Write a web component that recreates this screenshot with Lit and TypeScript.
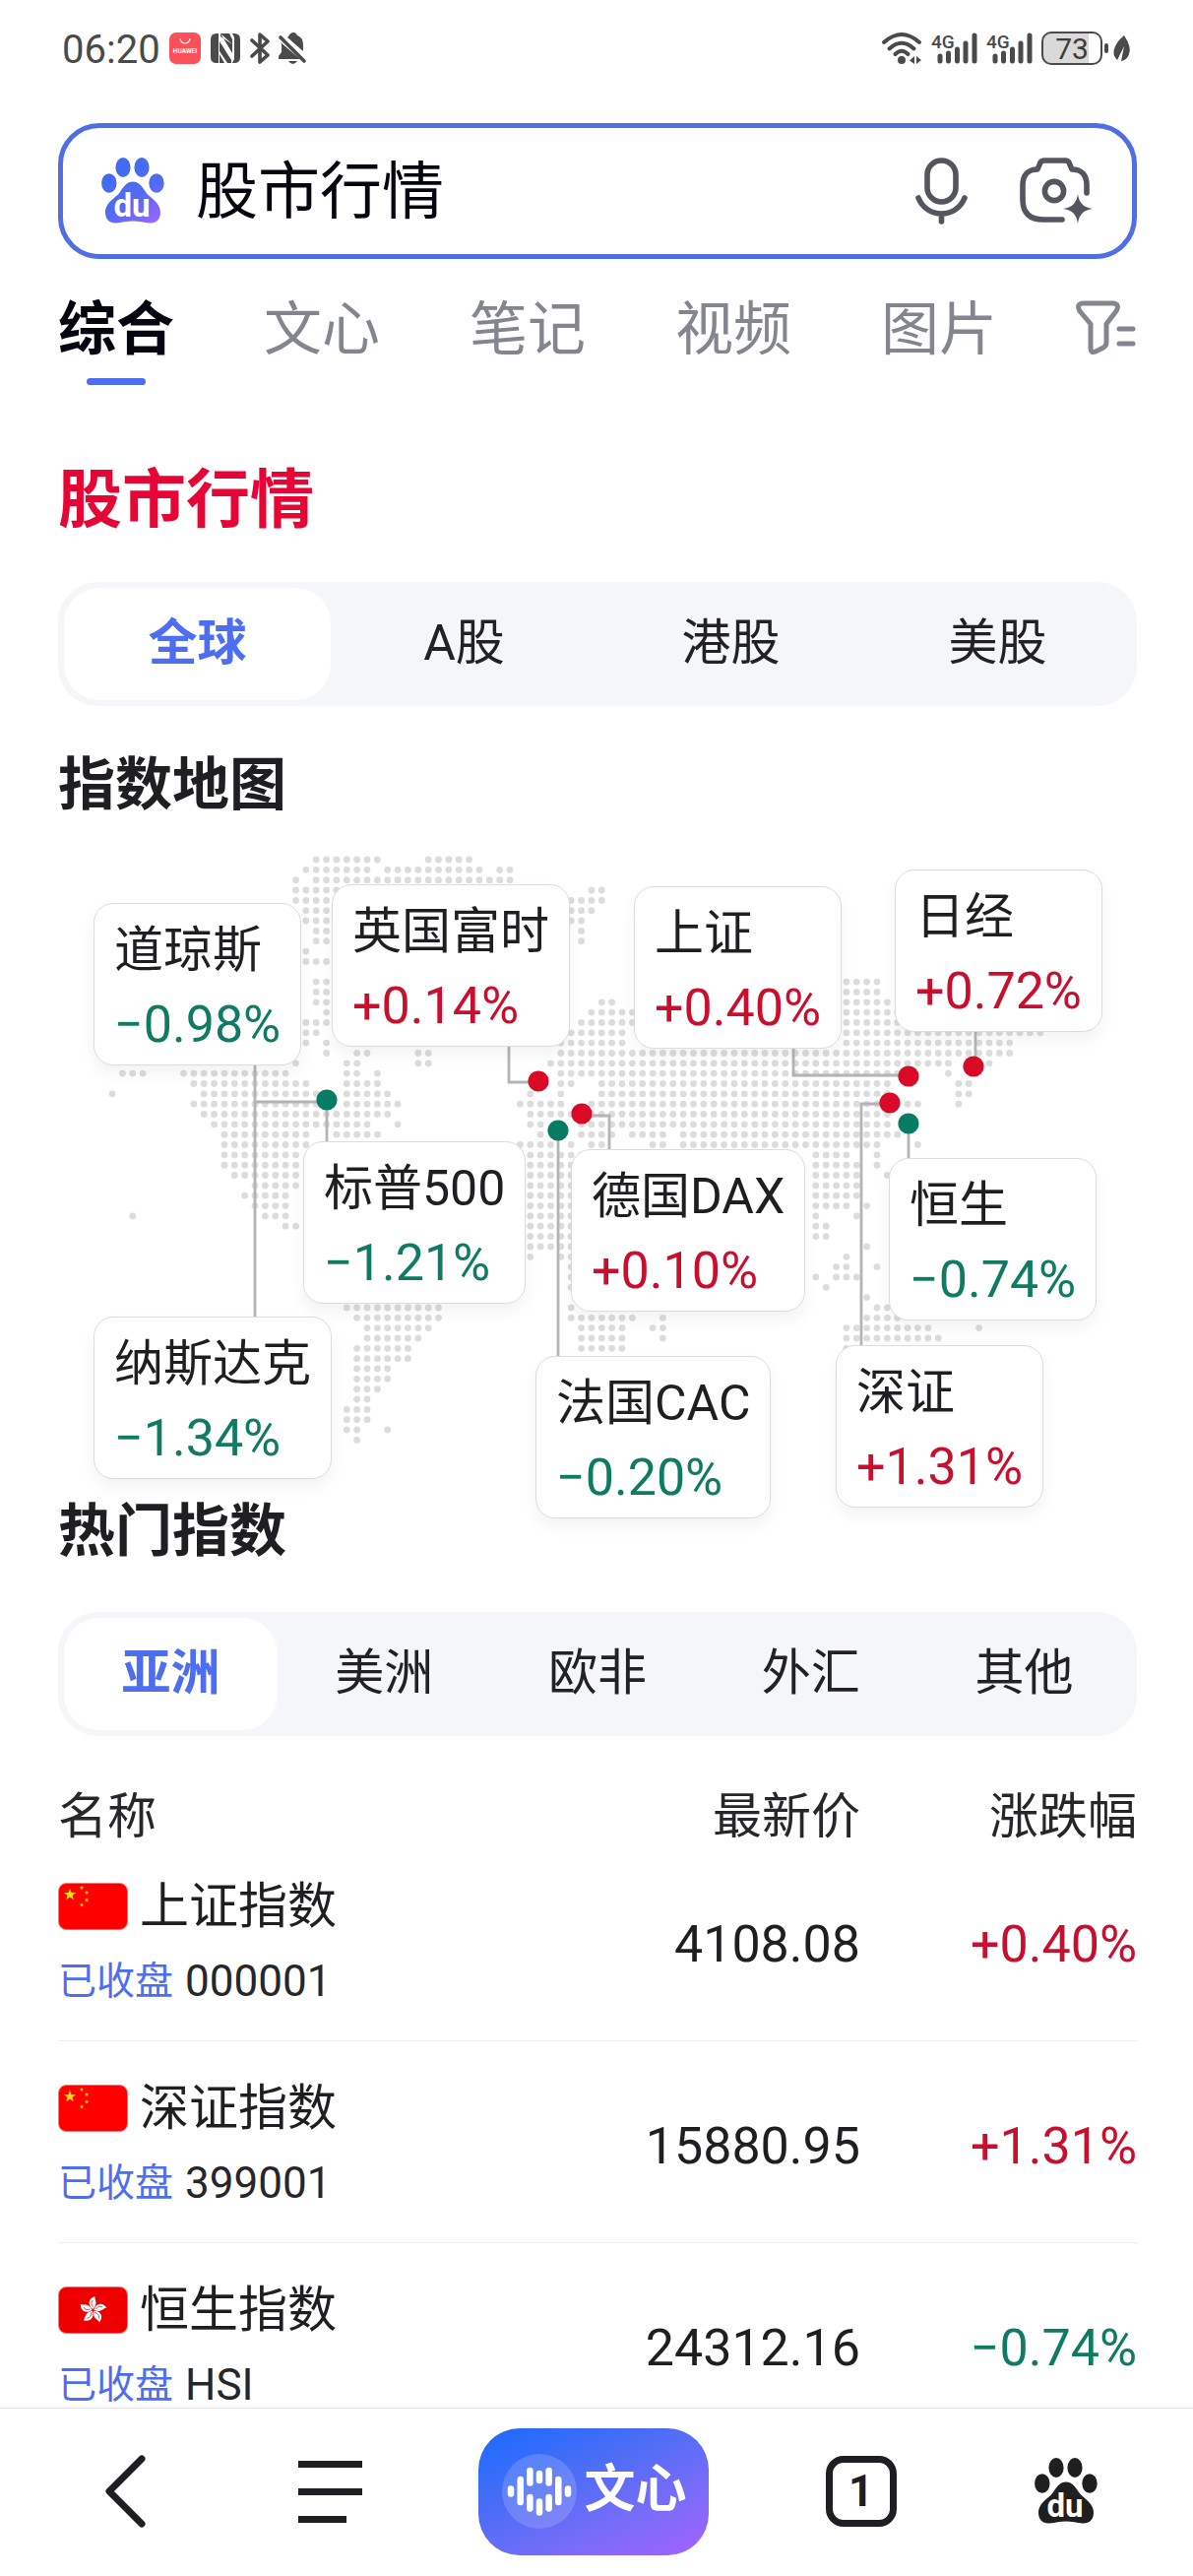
import {LitElement, html, svg, css} from 'lit';
import {customElement, property, state} from 'lit/decorators.js';
import {classMap} from 'lit/directives/class-map.js';
import {styleMap} from 'lit/directives/style-map.js';

interface IndexCard {
  name: string;
  change: string;
  x: number;
  y: number;
}

interface IndexRow {
  flag: 'cn' | 'hk';
  name: string;
  code: string;
  price: string;
  change: string;
}

const MAP_WIDTH = 1096;
const MAP_HEIGHT = 692;
const GRID_LEFT = 55;
const GRID_TOP = 43;
const GRID_STEP_X = 10.36;
const GRID_STEP_Y = 10.34;

// One entry per dot row of the world map, "from-to" column runs
const MAP_ROWS = [
  '20-26 31-35',
  '19-25 27-36 38-39',
  '18 20-39',
  '18-39 47-48',
  '18-21 45-48',
  '19-21 45-47',
  '19-21 45-46',
  '20-21 46',
  '20-21 46',
  '19',
  '19-21',
  '',
  '20-21 72-75',
  '20-21 72-75',
  '20-21 48-49 72-76',
  '21 47-51 72-77',
  '19-21 46-51 72-77',
  '19-20 45-50 72-91',
  '19 21 44-50 72-88',
  '21 24-25 30-31 44-88',
  '18 23-24 30-31 43-82 86',
  '1-3 7-17 23-24 26 44-78 82',
  '8-19 23-26 44-45 48-76 83-84',
  '0 9-20 23-27 41 44 48-76 83-84',
  '8-20 23-28 40-44 47-79 83',
  '9-27 41-76',
  '10-25 28 41-42 46-76',
  '11-19 22-26 42 46-49 51-54 56-77',
  '11-19 40-43 45 47-48 53-54 56-75 79',
  '11-18 41-47 69-72 75',
  '11-18 41-45 69-73 75',
  '12-18 41-45 69-73 76',
  '14-18 41-45 69-73',
  '13-17 41-45 69-73',
  '14-17 41-45 69-72 74',
  '2 15-17 41-45 69 73',
  '17-18 41-45 69-70',
  '41-45 69-70',
  '41-45 74',
  '41 44-45 72',
  '45 71-72 75',
  '45 69 71-73',
  '45 70',
  '74',
  '23-32 45 75-76',
  '24-32 45-51 54 74-77',
  '25-31 46-50 53-54 72-80 85',
  '25-30 46-50 54 72-81',
  '24-29 46-50 72',
  '24-29',
  '24-27',
  '24-27',
  '24-26',
  '24-25',
  '23-25',
  '23-25',
  '23-24 27',
  '24',
];

const CARDS: IndexCard[] = [
  {name: '道琼斯', change: '−0.98%', x: 36, y: 87},
  {name: '英国富时', change: '+0.14%', x: 278, y: 68},
  {name: '上证', change: '+0.40%', x: 585, y: 70},
  {name: '日经', change: '+0.72%', x: 850, y: 53},
  {name: '标普500', change: '−1.21%', x: 249, y: 329},
  {name: '德国DAX', change: '+0.10%', x: 521, y: 337},
  {name: '恒生', change: '−0.74%', x: 844, y: 346},
  {name: '纳斯达克', change: '−1.34%', x: 36, y: 507},
  {name: '法国CAC', change: '−0.20%', x: 485, y: 547},
  {name: '深证', change: '+1.31%', x: 790, y: 536},
];

const CONNECTORS = [
  'M200 250V508M200 289H273V330',
  'M458 230V269H488',
  'M747 234V262H863',
  'M932 216V253',
  'M532 303H560V338',
  'M508 318V548',
  'M845 291H816V537',
  'M864 311V347',
];

const MARKERS = [
  {x: 273, y: 287, up: false},
  {x: 488, y: 268, up: true},
  {x: 864, y: 263, up: true},
  {x: 930, y: 253, up: true},
  {x: 532, y: 301, up: true},
  {x: 508, y: 318, up: false},
  {x: 845, y: 290, up: true},
  {x: 864, y: 311, up: false},
];

const ROWS: IndexRow[] = [
  {flag: 'cn', name: '上证指数', code: '000001', price: '4108.08', change: '+0.40%'},
  {flag: 'cn', name: '深证指数', code: '399001', price: '15880.95', change: '+1.31%'},
  {flag: 'hk', name: '恒生指数', code: 'HSI', price: '24312.16', change: '−0.74%'},
];

const isUp = (change: string) => change.startsWith('+');

const starPoints = (cx: number, cy: number, r: number) =>
  Array.from({length: 10}, (_, i) => {
    const radius = i % 2 ? r * 0.4 : r;
    const angle = (i * Math.PI) / 5 - Math.PI / 2;
    return `${(cx + radius * Math.cos(angle)).toFixed(1)},${(cy + radius * Math.sin(angle)).toFixed(1)}`;
  }).join(' ');

const pawIcon = (fill: string) => html`
  <svg width="64" height="68" viewBox="0 0 64 68" aria-hidden="true">
    <defs>
      <linearGradient id="paw-gradient" gradientUnits="userSpaceOnUse" x1="16" y1="10" x2="56" y2="70">
        <stop offset="0" stop-color="#3f6cf0"/>
        <stop offset="0.5" stop-color="#536bf2"/>
        <stop offset="1" stop-color="#a066ff"/>
      </linearGradient>
    </defs>
    <g fill=${fill}>
      <ellipse cx="22" cy="10" rx="7.6" ry="10"/>
      <ellipse cx="41" cy="10" rx="7.6" ry="10"/>
      <ellipse cx="7.8" cy="26" rx="7.7" ry="9.8"/>
      <ellipse cx="56" cy="26" rx="7.7" ry="9.8"/>
      <path d="M32 24.500C38 24.500 41 29 45 35C49 41 60 45 60 56C60 63 55 67 49 66.500C43 66 38 64.500 32 64.500C26 64.500 21 66 15 66.500C9 67 4 63 4 56C4 45 15 41 19 35C23 29 26 24.500 32 24.500Z"/>
    </g>
    <text x="31" y="60" text-anchor="middle" fill="#fff" font-size="33" font-weight="700">du</text>
  </svg>`;

@customElement('status-bar')
class StatusBar extends LitElement {
  static styles = css`
    :host {
      display: flex;
      align-items: center;
      justify-content: space-between;
      height: 98px;
      padding: 0 64px 0 63px;
      color: #4a4a4a;
      font-size: 40px;
      line-height: 48px;
    }

    .group {
      display: flex;
      align-items: center;
      gap: 9px;
    }

    .time {
      padding-top: 3px;
    }

    svg {
      display: block;
      overflow: visible;
    }
  `;

  renderSignal() {
    return html`
      <svg width="47" height="34" viewBox="0 0 47 34" role="img" aria-label="4G">
        <text x="0" y="17" font-size="19" font-weight="500" fill="#4a4a4a">4G</text>
        <g stroke="#4a4a4a" stroke-width="5" stroke-linecap="round">
          <path d="M9 25V30M17.500 22V30M26.500 18V30M35 12V30M44 4V30"/>
        </g>
      </svg>`;
  }

  render() {
    return html`
      <div class="group">
        <time class="time">06:20</time>
        <svg width="32" height="32" viewBox="0 0 32 32" role="img" aria-label="HUAWEI">
          <rect width="32" height="32" rx="7" fill="#fb4f5a"/>
          <path d="M11 6a5 5 0 0 0 10 0" fill="none" stroke="#fff" stroke-width="1.200"/>
          <text x="16" y="21" text-anchor="middle" font-size="6.500" font-weight="700" fill="#fff">HUAWEI</text>
        </svg>
        <svg width="32" height="30" viewBox="-1 0 32 30" aria-hidden="true">
          <path fill="#4a4a4a" d="M6 0H8V30H6Q0 30 0 24V6Q0 0 6 0ZM10 0L22 20V11L10 3ZM22 0H24Q30 0 30 6V24Q30 30 24 30H22L24 26V4ZM9 8L21 27V30H17L9 18ZM9 21L14 30H9ZM10 0H19L22 6V11Z"/>
        </svg>
        <svg width="20" height="32" viewBox="0 0 20 32" aria-hidden="true">
          <path d="M2 8L18 23L10 30V2L18 9L2 24" fill="none" stroke="#4a4a4a" stroke-width="3.600" stroke-linejoin="round" stroke-linecap="round"/>
        </svg>
        <svg width="28" height="32" viewBox="0 0 28 32" aria-hidden="true">
          <path fill="#4a4a4a" d="M10 4Q12 0 15 0Q18 0 19 3Q25 5 25 13V19L9 5ZM2 10L22 27H0V24L3 20V12ZM10 29H19Q17 32 14.500 32Q12 32 10 29Z"/>
          <path d="M2 5L26 29" stroke="#4a4a4a" stroke-width="3.600" stroke-linecap="round"/>
        </svg>
      </div>
      <div class="group">
        <svg width="41" height="34" viewBox="0 0 41 34" aria-hidden="true">
          <g fill="none" stroke="#4a4a4a" stroke-width="4" stroke-linecap="round">
            <path d="M2 11Q20 -5 38 11M7.500 17.500Q20 6 32.500 17.500M13.500 23Q20 16.500 26.500 23"/>
          </g>
          <circle cx="20" cy="29" r="4" fill="#4a4a4a"/>
          <path d="M33 25V33L28 29.500ZM35 25L40 29L35 33Z" fill="#4a4a4a"/>
        </svg>
        ${this.renderSignal()}
        ${this.renderSignal()}
        <svg width="90" height="34" viewBox="0 0 90 34" role="img" aria-label="73%">
          <path d="M9 2H48V32H9Q2 32 2 25V9Q2 2 9 2Z" fill="#d9d9d9"/>
          <rect x="1" y="1" width="60" height="32" rx="9" fill="none" stroke="#4a4a4a" stroke-width="2"/>
          <text x="31" y="28" text-anchor="middle" font-size="30" fill="#3c3c3c">73</text>
          <rect x="64" y="12" width="4" height="10" rx="2" fill="#4a4a4a"/>
          <path d="M84 4Q92 16 89 23Q87 29 81 30L84 15L77 29Q71 23 75 15Q77 10 84 4Z" fill="#4a4a4a"/>
        </svg>
      </div>
    `
  }
}

@customElement('segment-bar')
class SegmentBar extends LitElement {
  @property({type: Array}) items: string[] = [];
  @state() selected = 0;

  static styles = css`
    :host {
      display: flex;
      height: 126px;
      box-sizing: border-box;
      padding: 6px;
      border-radius: 40px;
      background: #f4f6fa;
    }

    .segment {
      flex: 1;
      border: none;
      border-radius: 36px;
      padding: 0 0 2px;
      background: none;
      color: #222226;
      font: inherit;
      font-size: 50px;
      line-height: 60px;
      cursor: pointer;
    }

    .selected {
      background: #fff;
      color: #4e6ef2;
      font-weight: 700;
    }
  `;

  render() {
    return html`
      ${this.items.map((item, i) => html`
        <button class=${classMap({segment: true, selected: i === this.selected})}
                @click=${() => this.selected = i}>${item}</button>
      `)}
    `
  }
}

@customElement('index-map')
class IndexMap extends LitElement {
  static styles = css`
    :host {
      display: block;
      position: relative;
      aspect-ratio: 1096 / 692;
    }

    .canvas {
      display: block;
      width: 100%;
      height: 100%;
    }

    .card {
      position: absolute;
      display: flex;
      flex-direction: column;
      gap: 16px;
      box-sizing: border-box;
      min-width: 208px;
      padding: 17px 20px 10px;
      border: 1px solid #dcdcde;
      border-radius: 20px;
      background: #fff;
      box-shadow: 0 8px 16px rgba(0, 0, 0, 0.05);
      color: #1f1f23;
      font-size: 50px;
      line-height: 60px;
      white-space: nowrap;
      text-decoration: none;
    }

    .change {
      font-size: 52px;
      color: #0f7b62;
    }

    .up {
      color: #c8102e;
    }
  `;

  renderDots() {
    return MAP_ROWS.map((runs, row) => runs.split(' ').filter(Boolean).map(run => {
      const [from, to = from] = run.split('-').map(Number);
      return Array.from({length: to - from + 1}, (_, i) => svg`
        <circle cx=${(GRID_LEFT + (from + i) * GRID_STEP_X).toFixed(1)}
                cy=${(GRID_TOP + row * GRID_STEP_Y).toFixed(1)} r="3.400"/>`);
    }));
  }

  render() {
    return html`
      <svg class="canvas" viewBox="0 0 ${MAP_WIDTH} ${MAP_HEIGHT}" aria-hidden="true">
        <g fill="#dcdcdd">${this.renderDots()}</g>
        <g fill="none" stroke="#b3b3b8" stroke-width="2.800">
          ${CONNECTORS.map(d => svg`<path d=${d}/>`)}
        </g>
        ${MARKERS.map(m => svg`<circle cx=${m.x} cy=${m.y} r="10.600" fill=${m.up ? '#da0a26' : '#067c65'}/>`)}
      </svg>
      ${CARDS.map(card => html`
        <a class="card" href="#"
           style=${styleMap({left: `${card.x / MAP_WIDTH * 100}%`, top: `${card.y / MAP_HEIGHT * 100}%`})}>
          <span>${card.name}</span>
          <span class=${classMap({change: true, up: isUp(card.change)})}>${card.change}</span>
        </a>
      `)}
    `
  }
}

@customElement('index-table')
class IndexTable extends LitElement {
  static styles = css`
    :host {
      display: block;
      color: #1f1f23;
    }

    .table {
      width: 100%;
      border-collapse: collapse;
    }

    .table th {
      padding: 0;
      font-size: 50px;
      font-weight: 400;
      line-height: 46px;
      text-align: right;
      color: #26262b;
    }

    .table td {
      padding: 44px 0 36px;
      border-bottom: 1px solid #ededf0;
      font-size: 52px;
      text-align: right;
      white-space: nowrap;
    }

    .table .name {
      text-align: left;
    }

    .table td.name {
      padding-top: 30px;
    }

    .change {
      width: 281px;
      color: #0f7b62;
    }

    .table .up {
      color: #c8102e;
    }

    .title {
      display: flex;
      align-items: center;
      gap: 12px;
      font-size: 50px;
      line-height: 76px;
    }

    .sub {
      display: flex;
      gap: 12px;
      margin-top: 14px;
      font-size: 44px;
      line-height: 48px;
      color: #26262b;
    }

    .closed {
      font-size: 39px;
      color: #4e6ef2;
    }

    .flag {
      display: block;
    }
  `;

  renderFlag(flag: string) {
    if (flag === 'cn') {
      return html`
        <svg class="flag" width="71" height="48" viewBox="0 0 71 48" aria-hidden="true">
          <rect x="0.500" y="0.500" width="70" height="47" rx="8" fill="#ff0000" stroke="#f3787c"/>
          <g fill="#ffe000">
            <polygon points=${starPoints(12, 12, 6.5)}/>
            <polygon points=${starPoints(24, 5, 2.4)}/>
            <polygon points=${starPoints(29, 10, 2.4)}/>
            <polygon points=${starPoints(29, 17.5, 2.4)}/>
            <polygon points=${starPoints(24, 22.5, 2.4)}/>
          </g>
        </svg>`
    }
    return html`
      <svg class="flag" width="71" height="48" viewBox="0 0 71 48" aria-hidden="true">
        <rect x="0.500" y="0.500" width="70" height="47" rx="8" fill="#ee0000" stroke="#f3787c"/>
        <g transform="translate(35.5 24)">
          ${[0, 72, 144, 216, 288].map(angle => svg`
            <g transform="rotate(${angle})">
              <path d="M0 -1C-6 -5 -5 -12 2 -14C1 -11 6 -7 0 -1Z" fill="#fff"/>
              <path d="M0 -3C-2 -6 -2 -8 0 -10" fill="none" stroke="#ee0000" stroke-width="0.700"/>
            </g>`)}
        </g>
      </svg>`
  }

  render() {
    return html`
      <table class="table">
        <thead>
          <tr>
            <th class="name">名称</th>
            <th>最新价</th>
            <th>涨跌幅</th>
          </tr>
        </thead>
        <tbody>
          ${ROWS.map(row => html`
            <tr>
              <td class="name">
                <div class="title">${this.renderFlag(row.flag)}<span>${row.name}</span></div>
                <div class="sub"><span class="closed">已收盘</span><span>${row.code}</span></div>
              </td>
              <td>${row.price}</td>
              <td class=${classMap({change: true, up: isUp(row.change)})}>${row.change}</td>
            </tr>
          `)}
        </tbody>
      </table>
    `
  }
}

@customElement('bottom-nav')
class BottomNav extends LitElement {
  static styles = css`
    :host {
      display: flex;
      align-items: center;
      justify-content: space-between;
      height: 171px;
      box-sizing: border-box;
      padding: 0 97px 2px 107px;
      border-top: 1px solid #e6e6e8;
      background: #fff;
    }

    .item {
      display: flex;
      align-items: center;
      border: none;
      padding: 0;
      background: none;
      color: #1f1f23;
      font: inherit;
      cursor: pointer;
    }

    .back {
      width: 78px;
    }

    .home {
      width: 86px;
      justify-content: flex-end;
    }

    .assistant {
      gap: 6px;
      height: 129px;
      padding: 0 23px;
      border-radius: 42px;
      background: linear-gradient(155deg, #1f6bff 5%, #4f6df5 40%, #7a6cf9 70%, #9d63ff 95%);
      color: #fff;
      font-size: 52px;
      font-weight: 700;
      line-height: 60px;
    }

    .label {
      padding-bottom: 3px;
    }

    .windows {
      justify-content: center;
      box-sizing: border-box;
      width: 72px;
      height: 72px;
      border: 7px solid #1f1f23;
      border-radius: 18px;
      font-size: 44px;
      font-weight: 700;
      line-height: 44px;
    }
  `;

  render() {
    return html`
      <button class="item back" aria-label="返回">
        <svg width="41" height="74" viewBox="0 0 41 74">
          <path d="M37 4L4 37L37 70" fill="none" stroke="#1f1f23" stroke-width="7" stroke-linecap="round" stroke-linejoin="round"/>
        </svg>
      </button>
      <button class="item" aria-label="菜单">
        <svg width="65" height="63" viewBox="0 0 65 63">
          <path d="M0 3.500H65M0 31.500H65M0 59.500H49" stroke="#1f1f23" stroke-width="7"/>
        </svg>
      </button>
      <button class="item assistant">
        <svg width="78" height="78" viewBox="-39 -39 78 78" aria-hidden="true">
          <circle r="38" fill="#fff" fill-opacity="0.16"/>
          <path d="M-29 -2.500V2.500M-19.300 -12V11M-9.600 -21V-8.500M-9.600 6V17.500M0 -18V-11M0 10.500V21.500M9.600 -21V-8.500M9.600 6V17.500M19.300 -12V11M29 -2.500V2.500"
                fill="none" stroke="#fff" stroke-width="6.500" stroke-linecap="round"/>
        </svg>
        <span class="label">文心</span>
      </button>
      <button class="item windows">1</button>
      <button class="item home" aria-label="首页">${pawIcon('#1f1f1f')}</button>
    `
  }
}

@customElement('app-root')
class AppRoot extends LitElement {
  @state() tab = '综合';
  @state() query = '股市行情';

  tabs = ['综合', '文心', '笔记', '视频', '图片'];

  static styles = css`
    :host {
      display: flex;
      flex-direction: column;
      height: 100vh;
      overflow: hidden;
      background: #fff;
      color: #1f1f23;
      font-family: Roboto, "Noto Sans CJK SC", sans-serif;
    }

    .page {
      flex: 1;
      min-height: 0;
      overflow: hidden;
      padding: 0 57px 0 59px;
    }

    .search {
      display: flex;
      align-items: center;
      gap: 32px;
      box-sizing: border-box;
      height: 138px;
      margin: 27px 0 36px;
      padding: 0 40px 0 39px;
      border: 5px solid #4f6fe3;
      border-radius: 42px;
    }

    .query {
      flex: 1;
      min-width: 0;
      border: none;
      outline: none;
      padding: 2px 0 0;
      background: none;
      color: #05060f;
      font: inherit;
      font-size: 63px;
      line-height: 80px;
    }

    .tools {
      display: flex;
      align-items: center;
      gap: 53px;
    }

    .tool {
      display: block;
      border: none;
      padding: 0;
      background: none;
      cursor: pointer;
    }

    .tool svg {
      display: block;
    }

    .tabs {
      display: flex;
      justify-content: space-between;
      align-items: flex-start;
    }

    .tab-list {
      display: flex;
      gap: 91px;
    }

    .tab {
      display: flex;
      flex-direction: column;
      align-items: center;
      gap: 13px;
      border: none;
      padding: 0;
      background: none;
      color: #84868f;
      font: inherit;
      font-size: 59px;
      line-height: 72px;
      cursor: pointer;
    }

    .tab::after {
      content: '';
      width: 60px;
      height: 7px;
      border-radius: 4px;
    }

    .active {
      color: #05060f;
      font-weight: 700;
    }

    .active::after {
      background: #4e6ef2;
    }

    .filter {
      margin-top: 6px;
    }

    .headline {
      margin: 77px 0 43px;
      color: #e60534;
      font-size: 65px;
      font-weight: 700;
      line-height: 80px;
    }

    .section {
      margin: 0;
      font-size: 58px;
      font-weight: 700;
      line-height: 66px;
    }

    .map-title {
      margin-top: 47px;
    }

    .regions {
      margin: 49px 0 59px;
    }
  `;

  renderSearch() {
    return html`
      <form class="search" @submit=${(e: Event) => e.preventDefault()}>
        ${pawIcon('url(#paw-gradient)')}
        <input class="query" type="text" aria-label="搜索" .value=${this.query}
               @input=${(e: Event) => this.query = (e.target as HTMLInputElement).value}>
        <div class="tools">
          <button class="tool" type="button" aria-label="语音">
            <svg width="53" height="68" viewBox="0 0 53 68" fill="none" stroke="#53555f" stroke-width="5.600" stroke-linecap="round">
              <rect x="12" y="3" width="29" height="42" rx="14.500"/>
              <path d="M3 41C7 51 16 57 26.500 57S46 51 50 41M26.500 57V65"/>
            </svg>
          </button>
          <button class="tool" type="button" aria-label="拍照">
            <svg width="74" height="68" viewBox="0 0 74 68" fill="none" stroke="#53555f" stroke-width="5.600" stroke-linecap="round" stroke-linejoin="round">
              <path d="M43 63H24C10 63 3 56 3 43V28C3 17 9 12 18 12L21 5Q22 3 25 3H46Q49 3 50 5L53 12C63 12 68 18 68 28V36"/>
              <circle cx="35" cy="34" r="9.600"/>
              <path d="M59 37C60.500 46 64 50.500 74 52C64 53.500 60.500 58 59 67C57.500 58 54 53.500 44 52C54 50.500 57.500 46 59 37Z" fill="#53555f" stroke="none"/>
            </svg>
          </button>
        </div>
      </form>
    `
  }

  renderTabs() {
    return html`
      <nav class="tabs">
        <div class="tab-list">
          ${this.tabs.map(tab => html`
            <button class=${classMap({tab: true, active: tab === this.tab})}
                    @click=${() => this.tab = tab}>${tab}</button>
          `)}
        </div>
        <button class="tool filter" aria-label="筛选">
          <svg width="62" height="56" viewBox="0 0 62 56" fill="none" stroke="#84868f" stroke-width="5" stroke-linecap="round" stroke-linejoin="round">
            <path d="M7 3H38Q45 4 41 11L31 24V43Q31 46 28 48L20 52Q15 54 15 49V24L4 11Q0 4 7 3ZM44 29H58M44 44H58"/>
          </svg>
        </button>
      </nav>
    `
  }

  render() {
    return html`
      <status-bar></status-bar>
      <main class="page">
        ${this.renderSearch()}
        ${this.renderTabs()}
        <h1 class="headline">股市行情</h1>
        <segment-bar .items=${['全球', 'A股', '港股', '美股']}></segment-bar>
        <h2 class="section map-title">指数地图</h2>
        <index-map></index-map>
        <h2 class="section">热门指数</h2>
        <segment-bar class="regions" .items=${['亚洲', '美洲', '欧非', '外汇', '其他']}></segment-bar>
        <index-table></index-table>
      </main>
      <bottom-nav></bottom-nav>
    `
  }
}
